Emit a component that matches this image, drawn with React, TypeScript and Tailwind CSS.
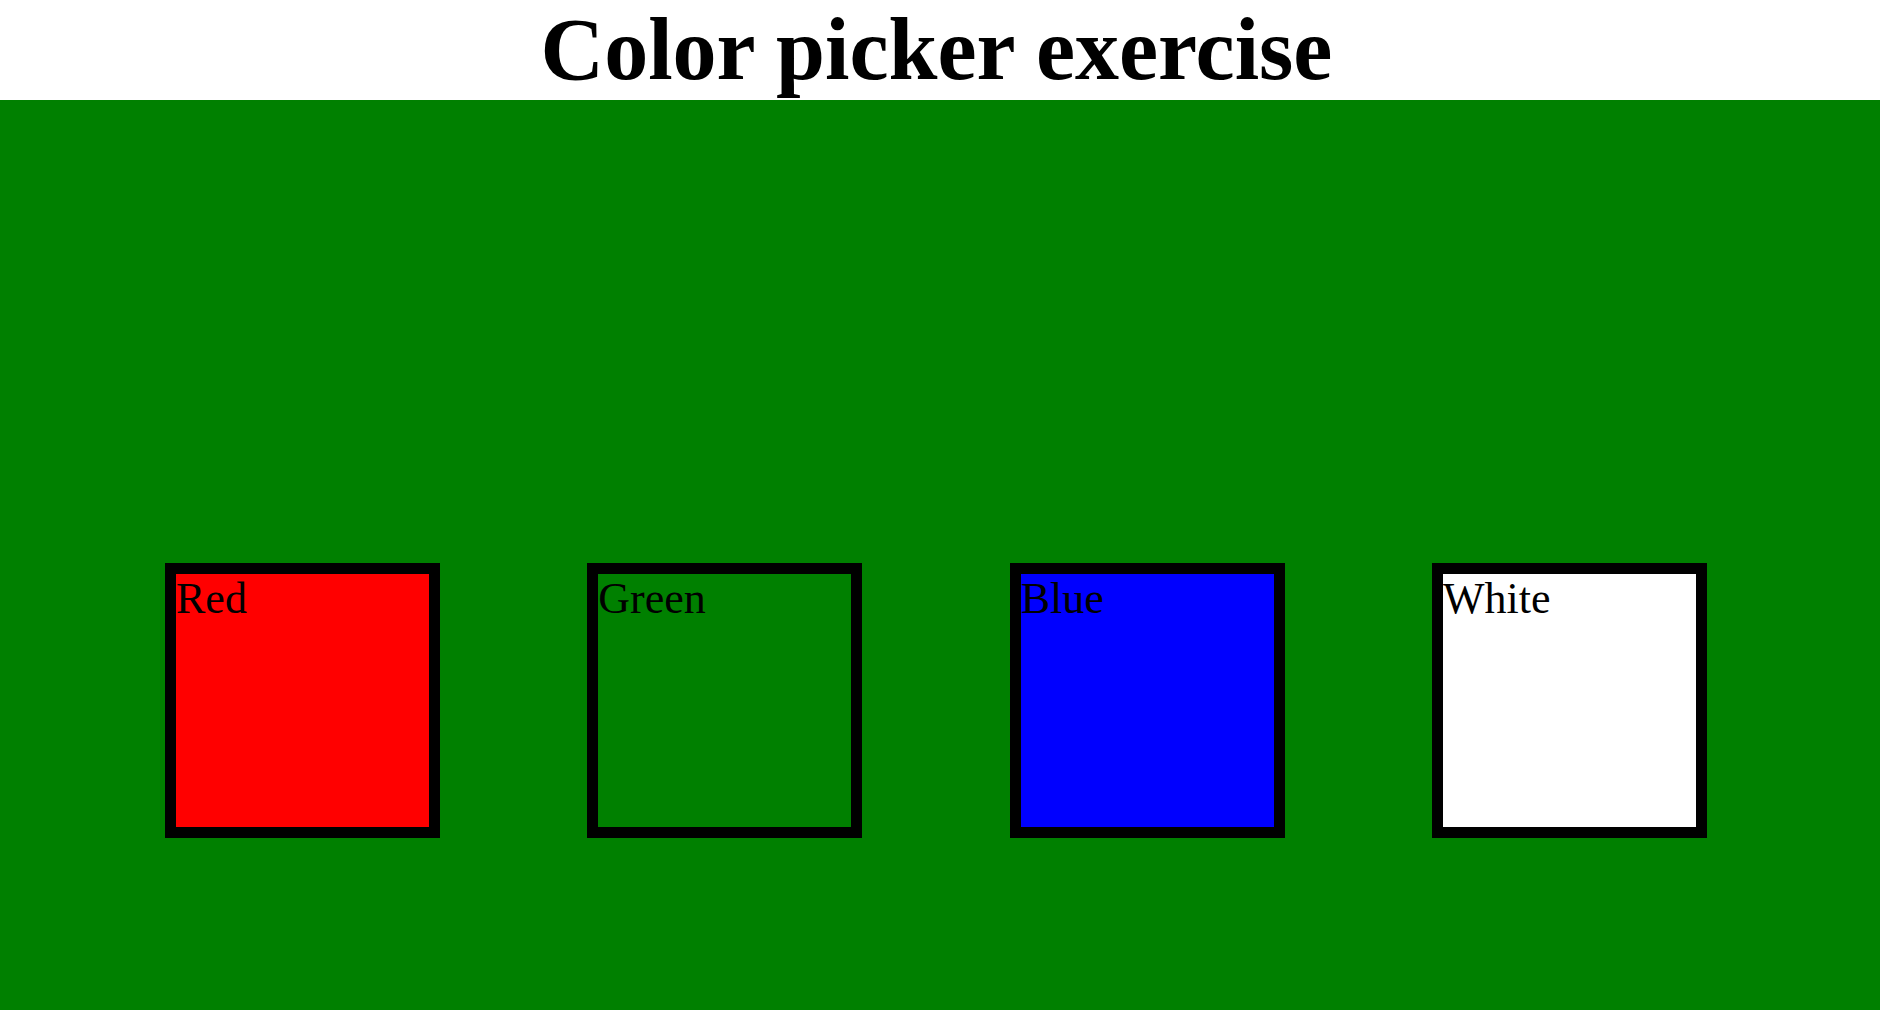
const swatches = [
  { name: "Red", bg: "bg-[#ff0000]" },
  { name: "Green", bg: "bg-[#008000]" },
  { name: "Blue", bg: "bg-[#0000ff]" },
  { name: "White", bg: "bg-white" },
];

export default function App() {
  return (
    <div className="min-h-[1010px] w-full bg-white font-['Liberation_Serif','Times_New_Roman',serif] text-black">
      <h1 className="m-0 h-[100px] pr-[7px] text-center text-[88px] font-bold leading-[100px]">Color picker exercise</h1>

      <div className="flex h-[910px] gap-[147.33px] bg-[#008000] pl-[165px] pt-[463px]">
        {swatches.map((s) => (
          <div
            key={s.name}
            className={`h-[275px] w-[275px] border-[11px] border-black ${s.bg} text-[44px] leading-[1.15]`}
          >
            {s.name}
          </div>
        ))}
      </div>
    </div>
  );
}
